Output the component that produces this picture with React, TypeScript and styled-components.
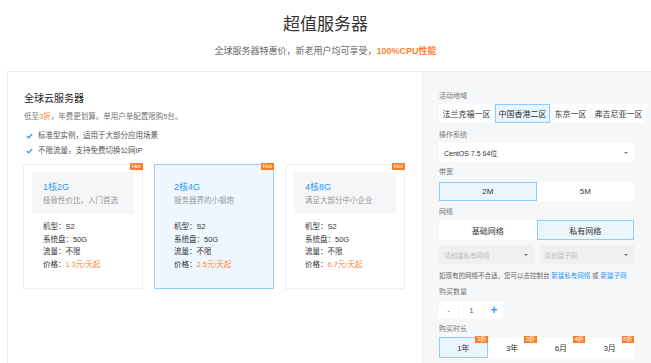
import React from "react";
import styled, { createGlobalStyle } from "styled-components";

const Global = createGlobalStyle`
  html, body { margin: 0; padding: 0; background: #fff; }
  body {
    width: 651px; height: 363px; overflow: hidden;
    font-family: "Liberation Sans", "Noto Sans CJK SC", sans-serif;
    color: #333;
  }
  * { box-sizing: border-box; }
`;

const Header = styled.header`
  height: 71px;
  display: flex;
  flex-direction: column;
  align-items: center;
  padding-top: 14px;
`;
const Title = styled.h1`
  margin: 0;
  font-size: 17px;
  line-height: 22px;
  font-weight: 400;
  color: #333;
`;
const Subtitle = styled.p`
  margin: 9px 0 0;
  font-size: 9px;
  line-height: 12px;
  color: #666;
`;
const Accent = styled.span<{ $bold?: boolean }>`
  color: #ff8533;
  font-weight: ${(p) => (p.$bold ? 700 : 400)};
`;

const Main = styled.div`
  margin-left: 7px;
  border: 1px solid #ececec;
  border-right: none;
  display: flex;
  height: 300px;
`;
const LeftPanel = styled.section`
  width: 415px;
  background: #fff;
  border-right: 1px solid #eceef1;
  padding: 20px 0 0 16px;
`;
const Heading = styled.h2`
  margin: 0;
  font-size: 10px;
  line-height: 14px;
  font-weight: 400;
  color: #222;
`;
const Desc = styled.p`
  margin: 5px 0 0;
  font-size: 7.5px;
  line-height: 12px;
  color: #777;
`;
const Features = styled.ul`
  list-style: none;
  margin: 7px 0 0;
  padding: 0 0 0 2px;
  display: flex;
  flex-direction: column;
  gap: 3px;
`;
const Feature = styled.li`
  display: flex;
  align-items: center;
  gap: 5px;
  font-size: 7.5px;
  line-height: 12px;
  color: #555;
`;
const Cards = styled.div`
  margin: 7px 0 0 -1px;
  display: flex;
  gap: 11px;
`;
const Card = styled.div<{ $active?: boolean }>`
  position: relative;
  width: 120px;
  height: 125px;
  border: 1px solid ${(p) => (p.$active ? "#93d2f8" : "#eeeff2")};
  background: ${(p) => (p.$active ? "#eef7fe" : "#fff")};
  padding: 7px 8px;
`;
const Badge = styled.span`
  position: absolute;
  top: -2px;
  right: -1px;
  background: #ff7b22;
  color: #fff;
  font-size: 6px;
  line-height: 7px;
  padding: 0 2px;
  font-family: "Liberation Sans", sans-serif;
`;
const CardHead = styled.div<{ $active?: boolean }>`
  height: 42px;
  background: ${(p) => (p.$active ? "transparent" : "#f5f6f8")};
  padding: 9px 11px 0;
`;
const Spec = styled.div`
  font-size: 9px;
  line-height: 12px;
  color: #2b9af3;
`;
const SpecSub = styled.div`
  margin-top: 2px;
  font-size: 7.5px;
  line-height: 12px;
  color: #999;
`;
const SpecList = styled.div`
  padding: 7px 0 0 11px;
  display: flex;
  flex-direction: column;
`;
const SpecRow = styled.div`
  font-size: 7.5px;
  line-height: 12.7px;
  color: #333;
`;

const RightPanel = styled.section`
  flex: 1;
  background: #f6f7f9;
  padding: 19px 17px 0 16px;
  display: flex;
  flex-direction: column;
`;
const Label = styled.div<{ $mt?: number }>`
  margin-top: ${(p) => p.$mt ?? 0}px;
  font-size: 7px;
  line-height: 10px;
  color: #777;
`;
const Seg = styled.div<{ $gap?: number; $mt?: number }>`
  margin-top: ${(p) => p.$mt ?? 3}px;
  display: flex;
  gap: ${(p) => p.$gap ?? 0}px;
`;
const SegItem = styled.div<{ $active?: boolean; $h?: number; $grow?: boolean }>`
  position: relative;
  flex: ${(p) => (p.$grow ? 1 : "none")};
  height: ${(p) => p.$h ?? 19}px;
  padding: 0 2.5px;
  display: flex;
  align-items: center;
  justify-content: center;
  font-size: 8px;
  color: #333;
  background: ${(p) => (p.$active ? "#eaf5fe" : "#fff")};
  border: 1px solid ${(p) => (p.$active ? "#8ecffa" : "#fff")};
`;
const Select = styled.div<{ $disabled?: boolean; $mt?: number }>`
  margin-top: ${(p) => p.$mt ?? 3}px;
  height: 19px;
  background: ${(p) => (p.$disabled ? "#eff0f2" : "#fff")};
  display: flex;
  align-items: center;
  justify-content: space-between;
  padding: 0 6px 0 5px;
  font-size: ${(p) => (p.$disabled ? 6.5 : 7)}px;
  color: ${(p) => (p.$disabled ? "#bbb" : "#333")};
`;
const Caret = styled.span`
  width: 0;
  height: 0;
  border-left: 2px solid transparent;
  border-right: 2px solid transparent;
  border-top: 2.5px solid #777;
`;
const SelectRow = styled.div`
  margin-top: 5px;
  display: flex;
  gap: 6px;
  & > div { margin-top: 0; flex: 1; }
`;
const Note = styled.p`
  margin: 7px 0 0;
  font-size: 6.5px;
  line-height: 10px;
  color: #666;
  white-space: nowrap;
`;
const Link = styled.a`
  color: #2b9af3;
  text-decoration: none;
`;
const Stepper = styled.div`
  margin-top: 4px;
  display: flex;
  gap: 1px;
`;
const StepBtn = styled.div<{ $w: number; $blue?: boolean; $big?: boolean }>`
  width: ${(p) => p.$w}px;
  height: 18px;
  background: #fff;
  display: flex;
  align-items: center;
  justify-content: center;
  font-size: ${(p) => (p.$big ? 12 : 8)}px;
  font-weight: ${(p) => (p.$blue ? 700 : 400)};
  color: ${(p) => (p.$blue ? "#2b9af3" : "#666")};
`;
const TagBadge = styled.span`
  position: absolute;
  top: -2px;
  right: -1px;
  background: #ff7b22;
  color: #fff;
  font-size: 6px;
  line-height: 7px;
  padding: 0 1.5px;
`;

const Check = () => (
  <svg width="7" height="6" viewBox="0 0 7 6">
    <polyline points="0.8,3 2.7,4.8 6.2,1" fill="none" stroke="#2b9af3" strokeWidth="1.2" />
  </svg>
);

const plans = [
  { spec: "1核2G", sub: "极致性价比，入门首选", price: "1.3元/天起" },
  { spec: "2核4G", sub: "服务器界的小钢炮", price: "2.5元/天起", active: true },
  { spec: "4核8G", sub: "满足大部分中小企业", price: "6.7元/天起" },
];

const regions = ["法兰克福一区", "中国香港二区", "东京一区", "弗吉尼亚一区"];
const durations = [
  { t: "1年", b: "3折", active: true },
  { t: "3年", b: "3折" },
  { t: "6月", b: "4折" },
  { t: "3月", b: "6折" },
];

export default function App() {
  return (
    <>
      <Global />
      <Header>
        <Title>超值服务器</Title>
        <Subtitle>
          全球服务器特惠价，新老用户均可享受，<Accent $bold>100%CPU性能</Accent>
        </Subtitle>
      </Header>
      <Main>
        <LeftPanel>
          <Heading>全球云服务器</Heading>
          <Desc>
            低至<Accent>3折</Accent>，年费更划算。单用户单配置限购5台。
          </Desc>
          <Features>
            <Feature>
              <Check />
              标准型实例，适用于大部分应用场景
            </Feature>
            <Feature>
              <Check />
              不限流量，支持免费切换公网IP
            </Feature>
          </Features>
          <Cards>
            {plans.map((p) => (
              <Card key={p.spec} $active={p.active}>
                <Badge>Hot</Badge>
                <CardHead $active={p.active}>
                  <Spec>{p.spec}</Spec>
                  <SpecSub>{p.sub}</SpecSub>
                </CardHead>
                <SpecList>
                  <SpecRow>机型：S2</SpecRow>
                  <SpecRow>系统盘：50G</SpecRow>
                  <SpecRow>流量：不限</SpecRow>
                  <SpecRow>
                    价格：<Accent>{p.price}</Accent>
                  </SpecRow>
                </SpecList>
              </Card>
            ))}
          </Cards>
        </LeftPanel>
        <RightPanel>
          <Label>活动地域</Label>
          <Seg $gap={1}>
            {regions.map((r, i) => (
              <SegItem key={r} $active={i === 1}>
                {r}
              </SegItem>
            ))}
          </Seg>
          <Label $mt={7}>操作系统</Label>
          <Select>
            CentOS 7.5 64位
            <Caret />
          </Select>
          <Label $mt={5}>带宽</Label>
          <Seg $mt={5}>
            <SegItem $grow $active>2M</SegItem>
            <SegItem $grow>5M</SegItem>
          </Seg>
          <Label $mt={6}>网络</Label>
          <Seg>
            <SegItem $grow $h={20}>基础网络</SegItem>
            <SegItem $grow $h={20} $active>私有网络</SegItem>
          </Seg>
          <SelectRow>
            <Select $disabled>
              请创建私有网络
              <Caret />
            </Select>
            <Select $disabled>
              请创建子网
              <Caret />
            </Select>
          </SelectRow>
          <Note>
            如现有的网络不合适，您可以去控制台 <Link>新建私有网络</Link> 或 <Link>新建子网</Link>
          </Note>
          <Label $mt={6}>购买数量</Label>
          <Stepper>
            <StepBtn $w={19}>-</StepBtn>
            <StepBtn $w={25}>1</StepBtn>
            <StepBtn $w={18} $blue $big>+</StepBtn>
          </Stepper>
          <Label $mt={5}>购买时长</Label>
          <Seg>
            {durations.map((d) => (
              <SegItem key={d.t} $grow $h={21} $active={d.active}>
                {d.t}
                <TagBadge>{d.b}</TagBadge>
              </SegItem>
            ))}
          </Seg>
        </RightPanel>
      </Main>
    </>
  );
}
